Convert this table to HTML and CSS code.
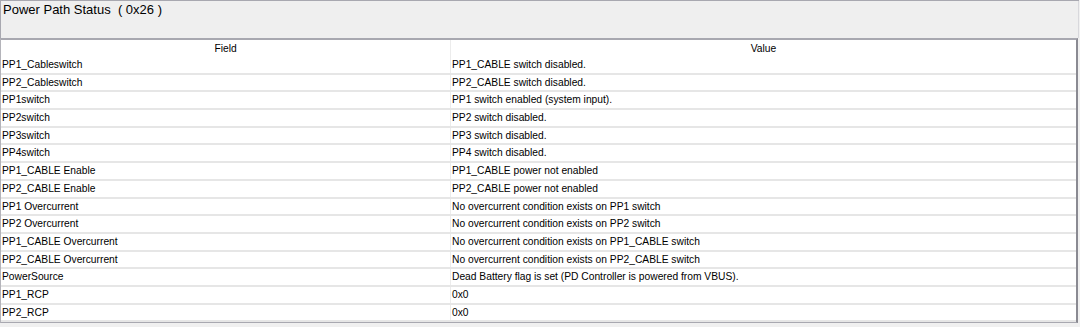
FILE: index.html
```html
<!DOCTYPE html>
<html>
<head>
<meta charset="utf-8">
<link rel="stylesheet" href="styles.css">
</head>
<body>
<div class="panel">
  <div class="title">Power Path Status&nbsp; ( 0x26 )</div>
  <div class="table">
    <div class="row head"><div class="cell c1">Field</div><div class="cell c2">Value</div></div>
    <div class="row"><div class="cell c1">PP1_Cableswitch</div><div class="cell c2">PP1_CABLE switch disabled.</div></div>
    <div class="row"><div class="cell c1">PP2_Cableswitch</div><div class="cell c2">PP2_CABLE switch disabled.</div></div>
    <div class="row"><div class="cell c1">PP1switch</div><div class="cell c2">PP1 switch enabled (system input).</div></div>
    <div class="row"><div class="cell c1">PP2switch</div><div class="cell c2">PP2 switch disabled.</div></div>
    <div class="row"><div class="cell c1">PP3switch</div><div class="cell c2">PP3 switch disabled.</div></div>
    <div class="row"><div class="cell c1">PP4switch</div><div class="cell c2">PP4 switch disabled.</div></div>
    <div class="row"><div class="cell c1">PP1_CABLE Enable</div><div class="cell c2">PP1_CABLE power not enabled</div></div>
    <div class="row"><div class="cell c1">PP2_CABLE Enable</div><div class="cell c2">PP2_CABLE power not enabled</div></div>
    <div class="row"><div class="cell c1">PP1 Overcurrent</div><div class="cell c2">No overcurrent condition exists on PP1 switch</div></div>
    <div class="row"><div class="cell c1">PP2 Overcurrent</div><div class="cell c2">No overcurrent condition exists on PP2 switch</div></div>
    <div class="row"><div class="cell c1">PP1_CABLE Overcurrent</div><div class="cell c2">No overcurrent condition exists on PP1_CABLE switch</div></div>
    <div class="row"><div class="cell c1">PP2_CABLE Overcurrent</div><div class="cell c2">No overcurrent condition exists on PP2_CABLE switch</div></div>
    <div class="row"><div class="cell c1">PowerSource</div><div class="cell c2">Dead Battery flag is set (PD Controller is powered from VBUS).</div></div>
    <div class="row"><div class="cell c1">PP1_RCP</div><div class="cell c2">0x0</div></div>
    <div class="row"><div class="cell c1">PP2_RCP</div><div class="cell c2">0x0</div></div>
  </div>
</div>
</body>
</html>
```
FILE: styles.css
```css
html, body {
  margin: 0;
  padding: 0;
  background: #f0f0f0;
}
body {
  width: 1080px;
  height: 327px;
  overflow: hidden;
  font-family: "Liberation Sans", Arial, sans-serif;
  color: #111;
}
.panel {
  width: 1079px;
  border-top: 1px solid #a8a8b0;
  border-left: 1px solid #a8a8b0;
  box-sizing: border-box;
}
.title {
  height: 37px;
  box-sizing: border-box;
  padding: 1px 0 0 2px;
  font-size: 13px;
  line-height: 16px;
  background: #efefef;
  border-right: 1px solid #d8d8dc;
  color: #000;
}
.table {
  background: #fff;
  border-top: 2px solid #a8a8b0;
  border-left: 1px solid #b4b4ba;
  border-right: 2px solid #8a8a92;
  border-bottom: 1px solid #a8a8b0;
  width: 1078px;
  margin-left: -1px;
  box-sizing: border-box;
}
.row {
  display: grid;
  grid-template-columns: 449px 1fr;
  height: 17.7px;
  box-sizing: border-box;
  border-bottom: 2px solid #e6e6e6;
  font-size: 10.25px;
  line-height: 16.5px;
  color: #000;
}
.row.head {
  height: 17px;
  border-bottom: none;
  line-height: 17px;
}
.cell {
  white-space: nowrap;
  overflow: hidden;
}
.c1 {
  padding-left: 1px;
}
.c2 {
  border-left: 1px solid #ececec;
  padding-left: 1px;
}
.head .cell {
  text-align: center;
  padding-left: 0;
}
```
